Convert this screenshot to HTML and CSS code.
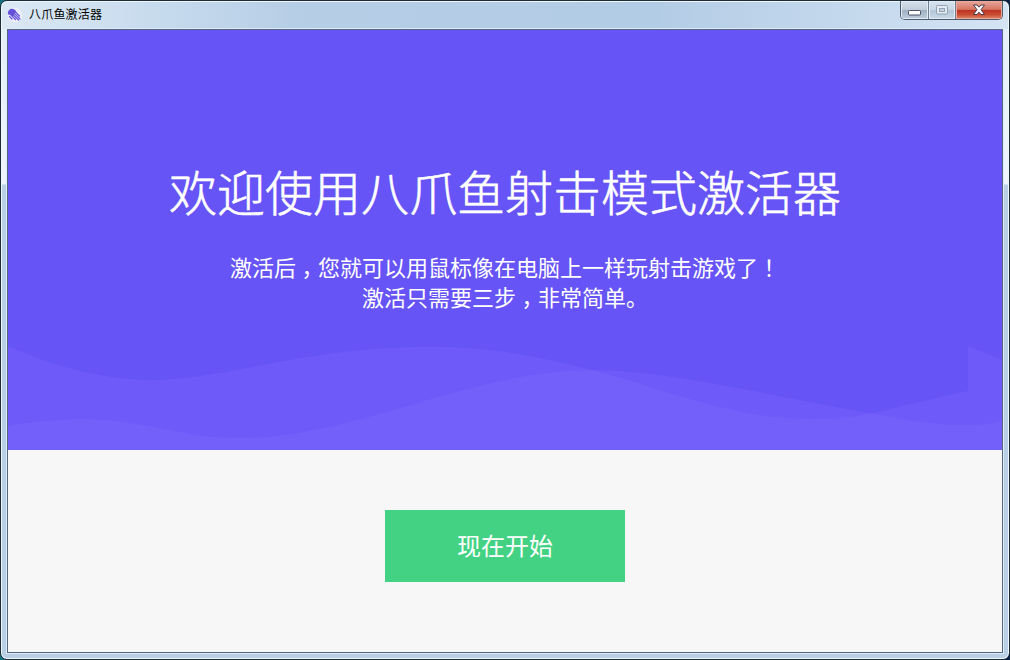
FILE: index.html
```html
<!DOCTYPE html>
<html lang="zh-CN">
<head>
  <meta charset="UTF-8">
  <meta name="viewport" content="width=device-width, initial-scale=1.0">
  <title>八爪鱼激活器</title>
  <link rel="stylesheet" href="styles.css">
</head>
<body>
  <div class="window">
    <header class="titlebar">
      <svg class="logo" width="16" height="16" viewBox="0 0 16 16">
        <circle cx="8" cy="8" r="7.5" fill="#f3f1ff" opacity=".7" />
        <path d="M1 7.5C.4 4.5 2.4 1.8 5 1.8c2 0 3 1.2 4.2 2.5L6 9.5 3.5 7.5Z" fill="#6552d8" />
        <g fill="none" stroke="#6552d8" stroke-width="1.2" stroke-linecap="round">
          <path d="M7 3.5 12.5 9" />
          <path d="M6 5 13 12" />
          <path d="M4.5 6 11.5 13" />
          <path d="M2.5 6.5 8.5 12.5" />
          <path d="M2.5 9.5 5 12" />
        </g>
      </svg>
      <span class="title">八爪鱼激活器</span>
      <div class="controls">
        <button class="control minimize" aria-label="最小化">
          <svg width="13" height="6" viewBox="0 0 13 6">
            <rect x=".5" y=".5" width="12" height="4.5" rx=".8" fill="#fff" stroke="#4b5363" />
          </svg>
        </button>
        <button class="control maximize" aria-label="最大化" disabled>
          <svg width="12" height="10" viewBox="0 0 12 10">
            <rect x=".5" y=".5" width="11" height="8.5" rx=".8" fill="#e3ebf2" stroke="#93a3b3" />
            <rect x="3.5" y="3.5" width="5" height="3" fill="#c4d1de" stroke="#93a3b3" />
          </svg>
        </button>
        <button class="control close" aria-label="关闭">
          <svg width="14" height="12" viewBox="0 0 14 12">
            <path d="M1.5 1H5L7 3.2 9 1h3.5L9 5.7l3.5 4.8H9L7 8.2 5 10.5H1.5L5 5.7Z" fill="#fff" stroke="#4c3b4b" />
          </svg>
        </button>
      </div>
    </header>

    <main class="content">
      <section class="hero">
        <h1>欢迎使用八爪鱼射击模式激活器</h1>
        <p>激活后<span class="mark">，</span>您就可以用鼠标像在电脑上一样玩射击游戏了<span class="mark">！</span><br>激活只需要三步<span class="mark">，</span>非常简单。</p>
        <svg class="waves" viewBox="8 340 994 110" preserveAspectRatio="none">
          <path d="M8 346C55 367 105 380 152 380C228 380 300 347 430 347C486 347 530 354 592 370C666 389 730 419 815 419C865 419 888 408 968 391V346L1002 360V450H8Z" />
          <path d="M8 426C35 421 60 419 83 419C145 419 180 438 240 438C355 438 470 370 592 370C670 370 790 400 875 414C900 419 935 425 960 425C975 425 990 424 1002 421V450H8Z" />
        </svg>
      </section>
      <section class="actions">
        <button class="start">现在开始</button>
      </section>
    </main>
  </div>
</body>
</html>
```
FILE: styles.css
```css
* {
  box-sizing: border-box;
}

body {
  height: 100vh;
  margin: 0;
  overflow: hidden;
  background: linear-gradient(90deg, #14717f, #0b2740 30%, #0b2144);
  font-family: 'Noto Sans CJK SC', sans-serif;
}

button {
  border: 0;
  padding: 0;
  font-family: inherit;
}

.window {
  display: flex;
  flex-direction: column;
  height: 100vh;
  padding: 0 6px 6px;
  border: 1px solid #1d2a38;
  border-radius: 7px;
  background: linear-gradient(#e3eef8 0, #eef5fc 183px, #b8cfe6 184px, #b8cfe6 100%);
  box-shadow: inset 0 0 0 1px #f0f8ff;
}

.titlebar {
  display: flex;
  align-items: flex-start;
  flex: 0 0 27px;
  margin: 1px -5px 0;
  padding-left: 5px;
  border-radius: 6px 6px 0 0;
  background: linear-gradient(90deg, #dbe8f4, #c6daed 16%, #b5cde5 30%, #b3cce5 65%, #c5d9ed 85%, #d4e4f3);
}

.logo {
  margin-top: 5px;
}

.title {
  margin-left: 6px;
  color: #000;
  font-size: 12px;
  line-height: 23px;
  letter-spacing: .2px;
}

.controls {
  display: flex;
  width: 103px;
  height: 19px;
  margin: -1px 5px 0 auto;
  border: 1px solid #4e5b6b;
  border-top: 0;
  border-radius: 0 0 5px 5px;
  overflow: hidden;
}

.control {
  display: flex;
  align-items: center;
  justify-content: center;
  width: 28px;
  border-right: 1px solid #6f7f90;
  background: linear-gradient(#d5e0eb, #c1ceda 48%, #9dafc1 50%, #bccddd);
  box-shadow: inset 0 0 0 1px #e3edf6;
}

.minimize svg {
  margin-top: 5px;
}

.maximize {
  width: 27px;
  background: linear-gradient(#d5e2ee, #c8d7e5 48%, #b4c6d7 50%, #c8d8e7);
}

.close {
  flex: 1;
  border-right: 0;
  background: linear-gradient(#e6a99d, #d77462 47%, #bc3320 50%, #c94c32 75%, #de8a67);
  box-shadow: inset 0 0 0 1px #eaa99c;
}

.content {
  display: flex;
  flex-direction: column;
  flex: 1;
  border: 1px solid #566780;
  background: #f7f7f7;
  box-shadow: 0 0 0 1px #dcebf9;
}

.hero {
  position: relative;
  flex: 0 0 420px;
  padding-top: 125px;
  background: #6654f6;
  color: #fff;
  text-align: center;

  h1 {
    margin: 0;
    font-size: 48px;
    font-weight: 300;
    line-height: 70px;
    -webkit-text-stroke: .6px #fff;
  }

  p {
    margin: 26px 0 0;
    font-size: 22px;
    line-height: 30px;
  }

  /* half-width glyph centred in a full-width cell */
  .mark {
    margin: 0 .25em;
    font-feature-settings: 'halt';
  }
}

.waves {
  position: absolute;
  left: 0;
  bottom: 0;
  width: 100%;
  height: 110px;
  fill: #8472ff;
  fill-opacity: .24;
}

.actions {
  display: flex;
  justify-content: center;
  padding-top: 60px;
}

.start {
  width: 240px;
  height: 72px;
  padding-bottom: 3px;
  background: #43d283;
  color: #fff;
  font-size: 24px;
  cursor: pointer;
}
```
